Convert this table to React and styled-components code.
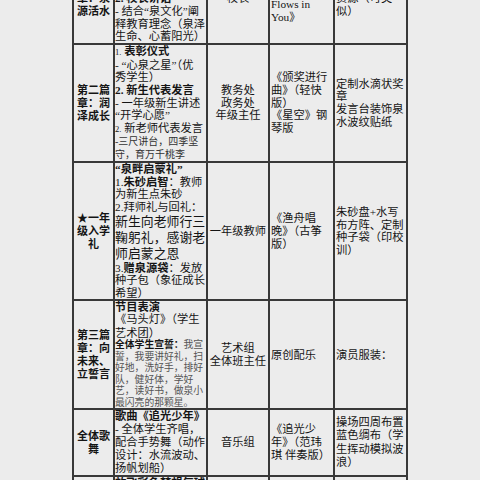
import React from 'react'
import styled, { createGlobalStyle } from 'styled-components';

const GlobalStyle = createGlobalStyle`
  body {
    margin: 0;
    background: #ececec;
    font-family: "Liberation Serif", "Noto Sans CJK SC", serif;
    color: #141414;
  }
`;

const Viewport = styled.div`
  height: 480px;
  overflow: hidden;
`;

const Sheet = styled.div`
  display: grid;
  grid-template-columns: 41px 93px 62px 65px 73px;
  width: max-content;
  margin: -48px 0 0 72px;
  border: 1px solid #383838;
`;

const Cell = styled.div`
  box-sizing: border-box;
  border: 1px solid #383838;
  display: flex;
  flex-direction: column;
  justify-content: center;
  align-items: ${p => (p.$center ? 'center' : 'flex-start')};
  padding: 0 ${p => p.$pad ?? 1}px;
  font-size: 11.25px;
  line-height: ${p => p.$lh ?? 12.7}px;
  min-width: 0;
`;

const Title = styled(Cell)`
  align-items: center;
  font-weight: 700;
  font-size: 11px;
  line-height: 13px;
`;

const Line = styled.span`
  display: block;
  white-space: nowrap;
  ${p => p.$size && `font-size: ${p.$size}px;`}
  ${p => p.$lh && `line-height: ${p.$lh}px;`}
  ${p => p.$bold && 'font-weight: 700;'}
  ${p => p.$color && `color: ${p.$color};`}
`;

const Num = styled.span`
  font-size: 8.5px;
  font-weight: 400;
`;

const B = styled.b`
  font-weight: 700;
`;

const Gray = styled.span`
  color: #555;
`;

const App = () => {
  return (
    <Viewport>
      <GlobalStyle />
      <Sheet>
        {/* 第一篇章 */}
        <Title><Line>第一篇</Line><Line>章：泉</Line><Line>源活水</Line></Title>
        <Cell $pad={0}>
          <Line $bold>1. 开场表演</Line>
          <Line>- 舞蹈《泉韵》</Line>
          <Line>（学生舞蹈团）</Line>
          <Line $bold>2. 校长讲话</Line>
          <Line>- 结合“泉文化”阐</Line>
          <Line>释教育理念（泉泽</Line>
          <Line>生命、心蓄阳光）</Line>
        </Cell>
        <Cell $center><Line>校长</Line></Cell>
        <Cell><Line>钢琴曲</Line><Line>《River</Line><Line>Flows in</Line><Line>You》</Line></Cell>
        <Cell><Line>泉水</Line><Line>资源（可类</Line><Line>似）</Line></Cell>

        {/* 第二篇章 */}
        <Title><Line>第二篇</Line><Line>章：润</Line><Line>泽成长</Line></Title>
        <Cell $pad={0}>
          <Line><Num>1.</Num> <B>表彰仪式</B></Line>
          <Line>- “心泉之星”（优</Line>
          <Line>秀学生）</Line>
          <Line $bold>2. 新生代表发言</Line>
          <Line>- 一年级新生讲述</Line>
          <Line>“开学心愿”</Line>
          <Line><Num>2.</Num> 新老师代表发言</Line>
          <Line $size={10} $color="#333">-三尺讲台，四季坚</Line>
          <Line $size={10} $color="#333">守，育万千桃李</Line>
        </Cell>
        <Cell $center $lh={12.6}><Line>教务处</Line><Line>政务处</Line><Line>年级主任</Line></Cell>
        <Cell><Line>《颁奖进行</Line><Line>曲》（轻快</Line><Line>版）</Line><Line>《星空》钢</Line><Line>琴版</Line></Cell>
        <Cell><Line>定制水滴状奖</Line><Line>章</Line><Line>发言台装饰泉</Line><Line>水波纹贴纸</Line></Cell>

        {/* 一年级入学礼 */}
        <Title><Line>★一年</Line><Line>级入学</Line><Line>礼</Line></Title>
        <Cell $pad={0} $lh={12.6}>
          <Line $bold>“泉畔启蒙礼”</Line>
          <Line>1.<B>朱砂启智</B>：教师</Line>
          <Line>为新生点朱砂</Line>
          <Line>2.拜师礼与回礼：</Line>
          <Line $size={12.9} $lh={16}>新生向老师行三</Line>
          <Line $size={12.9} $lh={16}>鞠躬礼，感谢老</Line>
          <Line $size={12.9} $lh={16}>师启蒙之恩</Line>
          <Line>3.<B>赠泉源袋</B>：发放</Line>
          <Line>种子包（象征成长</Line>
          <Line>希望）</Line>
        </Cell>
        <Cell $center><Line>一年级教师</Line></Cell>
        <Cell><Line>《渔舟唱</Line><Line>晚》（古筝</Line><Line>版）</Line></Cell>
        <Cell><Line>朱砂盘+水写</Line><Line>布方阵、定制</Line><Line>种子袋（印校</Line><Line>训）</Line></Cell>

        {/* 第三篇章 */}
        <Title $lh={12.8}><Line>第三篇</Line><Line>章：向</Line><Line>未来、</Line><Line>立誓言</Line></Title>
        <Cell $pad={0}>
          <Line $bold $lh={12}>节目表演</Line>
          <Line $lh={13.5}>《马头灯》（学生</Line>
          <Line $lh={12.5}>艺术团）</Line>
          <Line $size={9.8} $lh={11.5}><B>全体学生宣誓：</B><Gray>我宣</Gray></Line>
          <Line $size={9.8} $lh={11.5} $color="#555">誓，我要讲好礼，扫</Line>
          <Line $size={9.8} $lh={11.5} $color="#555">好地，洗好手，排好</Line>
          <Line $size={9.8} $lh={11.5} $color="#555">队，健好体，学好</Line>
          <Line $size={9.8} $lh={11.5} $color="#555">艺，读好书，做泉小</Line>
          <Line $size={9.8} $lh={11.5} $color="#555">最闪亮的那颗星。</Line>
        </Cell>
        <Cell $center $lh={13.3}><Line>艺术组</Line><Line>全体班主任</Line></Cell>
        <Cell><Line>原创配乐</Line></Cell>
        <Cell><Line>演员服装：</Line></Cell>

        {/* 全体歌舞 */}
        <Title $lh={11.7}><Line>全体歌</Line><Line>舞</Line></Title>
        <Cell $pad={0} $lh={12.9}>
          <Line $bold>歌曲《追光少年》</Line>
          <Line>- 全体学生齐唱，</Line>
          <Line>配合手势舞（动作</Line>
          <Line>设计：水流波动、</Line>
          <Line>扬帆划船）</Line>
        </Cell>
        <Cell $center><Line>音乐组</Line></Cell>
        <Cell $lh={13}><Line>《追光少</Line><Line>年》（范玮</Line><Line>琪 伴奏版）</Line></Cell>
        <Cell $lh={13.3}><Line>操场四周布置</Line><Line>蓝色绸布（学</Line><Line>生挥动模拟波</Line><Line>浪）</Line></Cell>

        {/* 尾声 */}
        <Title><Line>尾声：</Line><Line>逐梦</Line><Line>启航</Line></Title>
        <Cell $pad={0}>
          <Line $bold>放飞彩色梦想气球</Line>
          <Line>- 全体师生倒数，</Line>
          <Line>同时放飞写有心</Line>
          <Line>愿的彩色气球</Line>
          <Line>- 全体师生合影</Line>
        </Cell>
        <Cell $center><Line>德育处</Line></Cell>
        <Cell><Line>《梦想起航》</Line></Cell>
        <Cell><Line>彩色气球</Line></Cell>
      </Sheet>
    </Viewport>
  )
}

export default App;
